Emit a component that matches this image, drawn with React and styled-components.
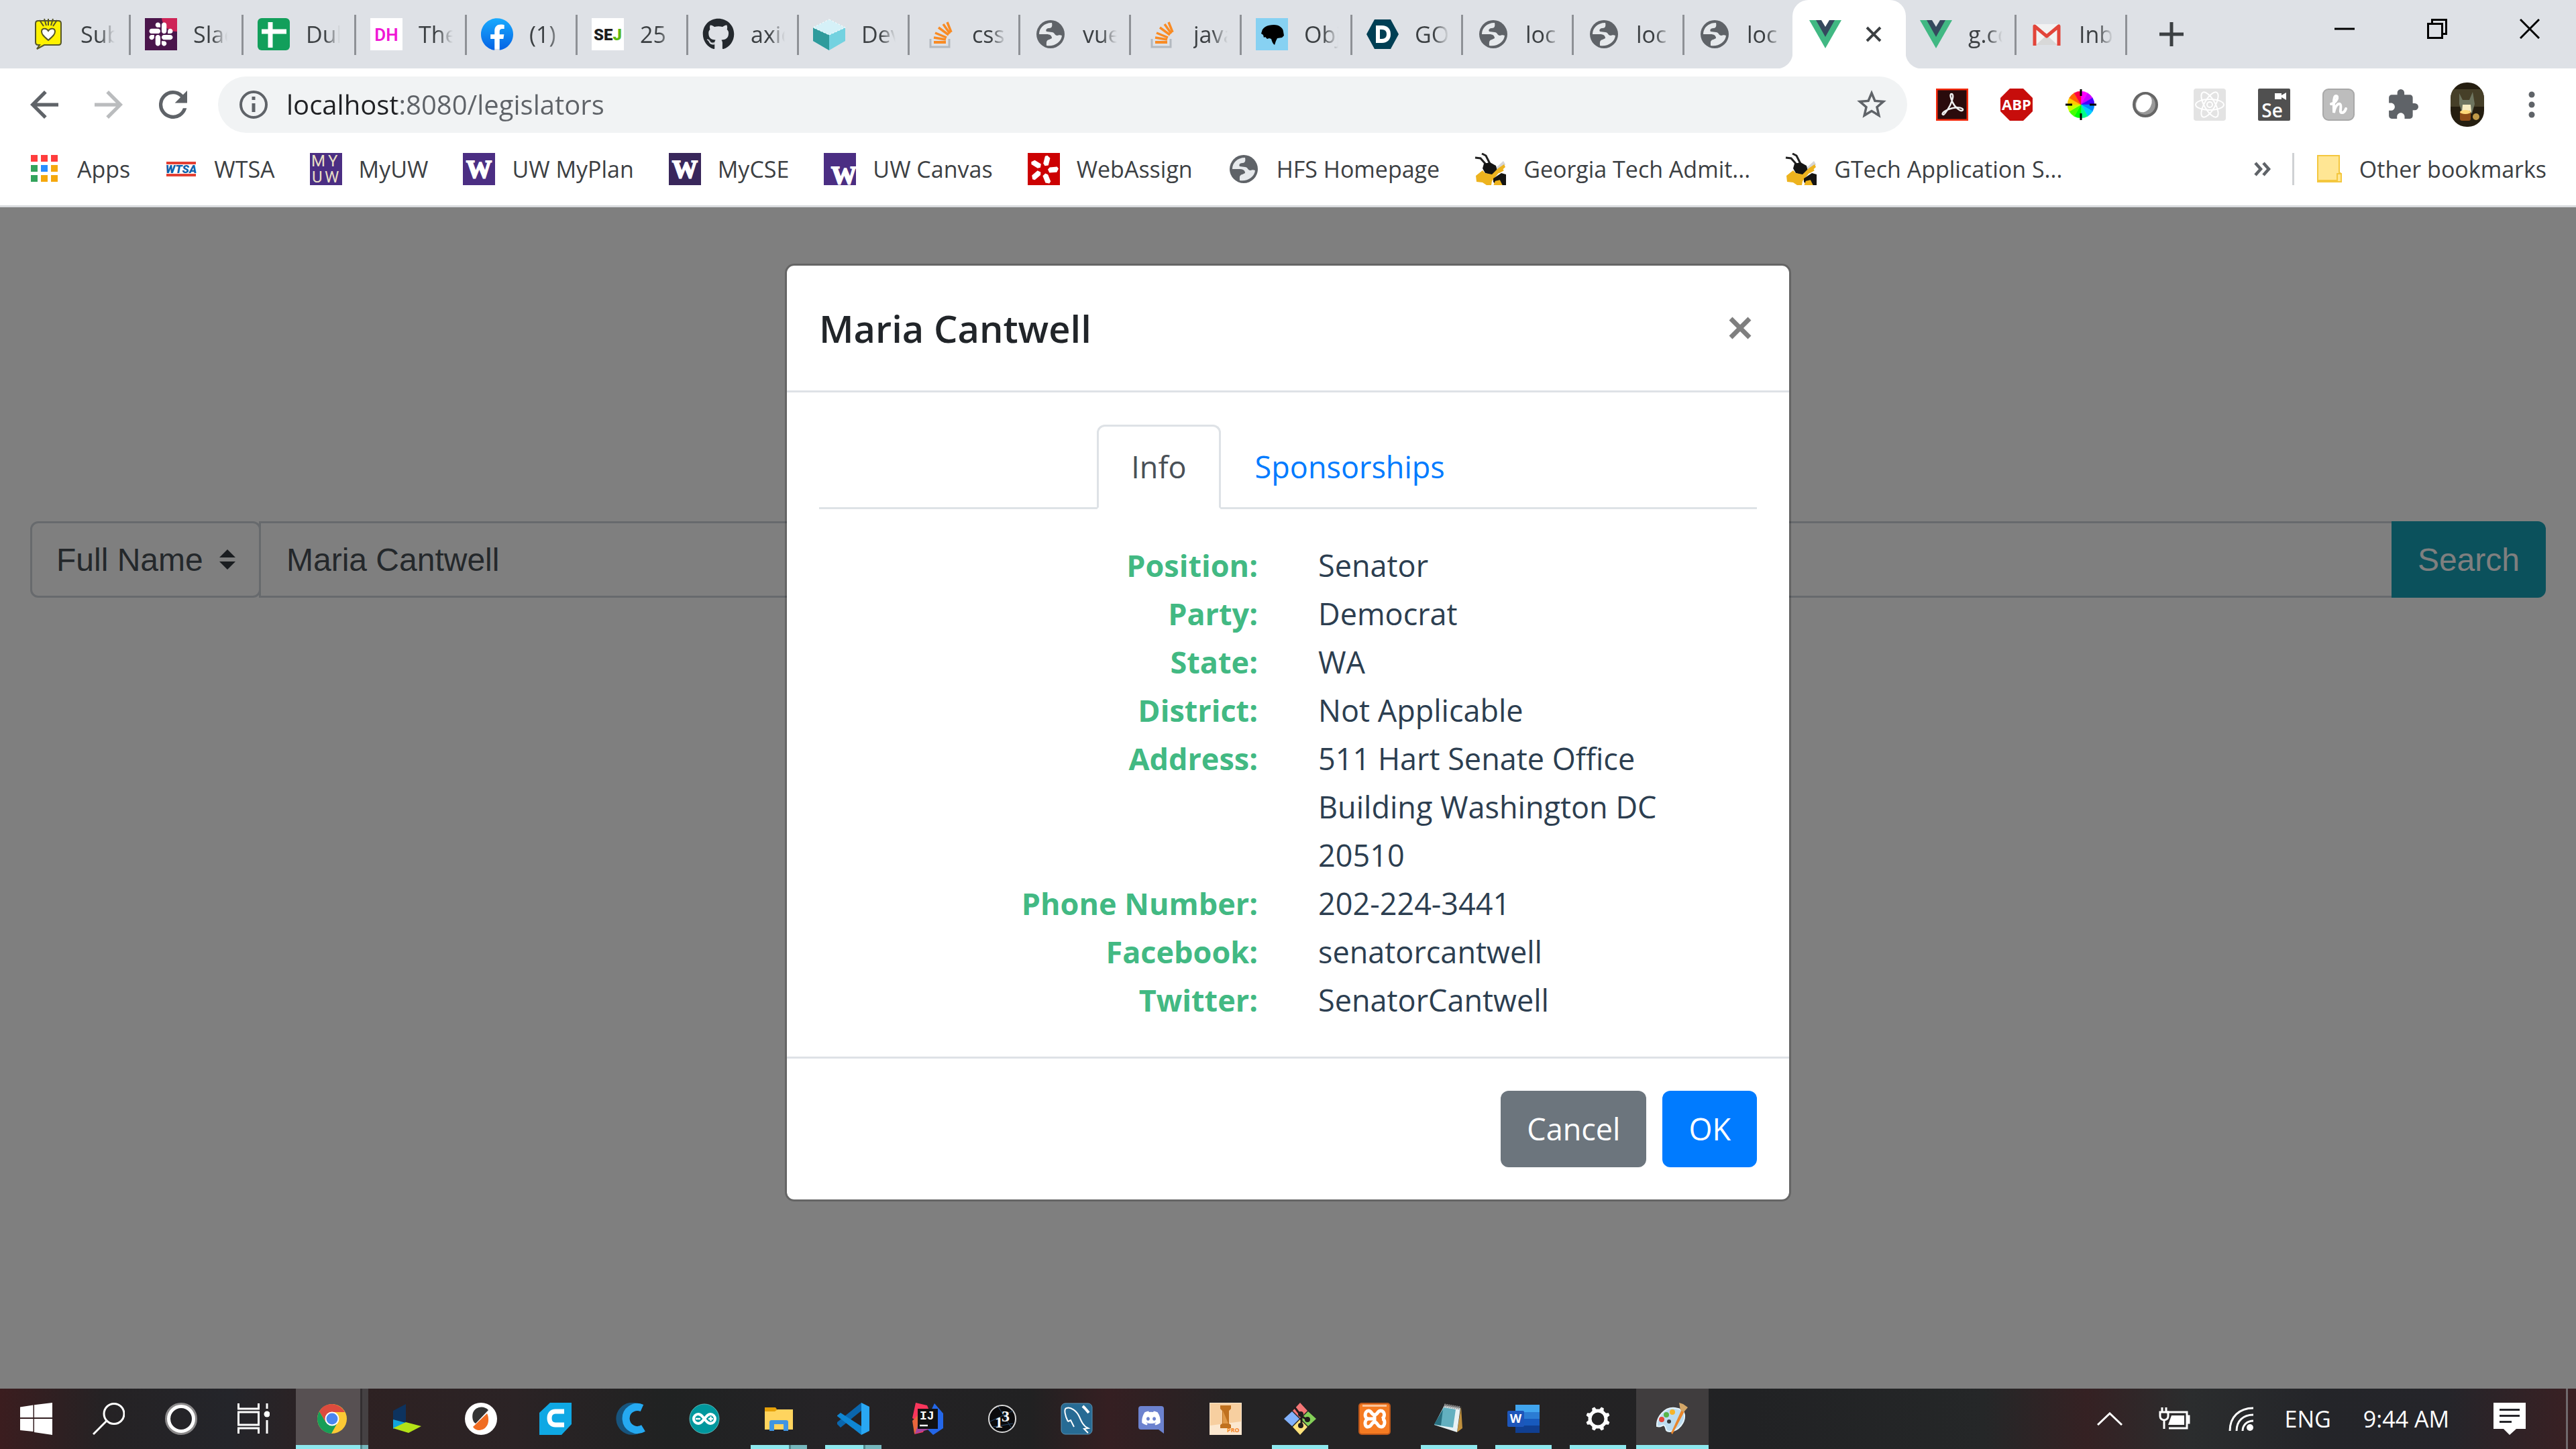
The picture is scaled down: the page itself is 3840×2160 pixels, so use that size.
import React, { useState } from "react";
import styled, { createGlobalStyle, css } from "styled-components";
import { FaGithub, FaSlack, FaDiscord } from "react-icons/fa";

const uiFont = `"Open Sans", "Noto Sans", sans-serif`;
const formFont = `"Liberation Sans", Arial, sans-serif`;

const GlobalStyle = createGlobalStyle`
  * { box-sizing: border-box; }
  body { margin: 0; font-family: ${uiFont}; }
  button, input, select { font-family: inherit; margin: 0; }
  button { border: 0; padding: 0; background: none; cursor: pointer; }
  a { text-decoration: none; }
  svg { display: block; flex: none; }
`;

/* ---------- layout ---------- */

const Screen = styled.div`
  display: flex;
  flex-direction: column;
  min-height: 100vh;
`;

const TabStrip = styled.div`
  display: flex;
  height: 102px;
  padding-left: 27px;
  background: #dee1e6;
`;

const Tab = styled.button`
  display: flex;
  align-items: center;
  flex: none;
  gap: 24px;
  width: ${(p) => (p.$wide ? 168 : 165)}px;
  padding-left: 21px;
  color: #3c4043;
  background: linear-gradient(#8e9196, #8e9196) right 22px / 3px 60px no-repeat;
  ${(p) => p.$last && css`background: none;`}
`;

const TabTitle = styled.span`
  width: 51px;
  overflow: hidden;
  white-space: nowrap;
  text-align: left;
  font-size: 34px;
  line-height: 48px;
  mask-image: linear-gradient(90deg, #000 55%, transparent);
`;

const ActiveTab = styled.div`
  position: relative;
  display: flex;
  align-items: center;
  flex: none;
  gap: 36px;
  width: 169px;
  margin-left: -4px;
  padding-left: 25px;
  background: #fff;
  border-radius: 24px 24px 0 0;

  &::before,
  &::after {
    content: "";
    position: absolute;
    bottom: 0;
    width: 24px;
    height: 24px;
  }
  &::before {
    right: 100%;
    background: radial-gradient(circle at 0 0, transparent 24px, #fff 25px);
  }
  &::after {
    left: 100%;
    background: radial-gradient(circle at 100% 0, transparent 24px, #fff 25px);
  }
`;

const NewTab = styled.button`
  display: grid;
  place-items: center;
  width: 84px;
  margin-left: 24px;
`;

const WindowControls = styled.div`
  display: flex;
  height: 86px;
  margin-left: auto;
`;

const WindowButton = styled.button`
  display: grid;
  place-items: center;
  width: 138px;
`;

const Toolbar = styled.div`
  display: flex;
  align-items: center;
  height: 108px;
  padding: 0 18px;
  background: #fff;
`;

const ToolButton = styled.button`
  display: grid;
  place-items: center;
  flex: none;
  width: 96px;
  height: 84px;
`;

const AddressBar = styled.div`
  display: flex;
  align-items: center;
  flex: 1;
  height: 84px;
  margin: 0 19px;
  padding: 0 29px 0 31px;
  gap: 27px;
  border-radius: 42px;
  background: #f1f3f4;
`;

const AddressInput = styled.input`
  flex: 1;
  border: 0;
  padding: 0;
  outline: none;
  font-size: 40px;
  line-height: 60px;
  color: transparent;
  background: linear-gradient(90deg, #202124 165px, #5f6368 165px);
  background-clip: text;
`;

const BookmarksBar = styled.nav`
  display: flex;
  align-items: center;
  height: 99px;
  padding: 0 44px 12px 42px;
  background: #fff;
  border-bottom: 3px solid #d9dbde;
`;

const Bookmark = styled.a`
  display: flex;
  align-items: center;
  flex: none;
  gap: 25px;
  margin-right: 52px;
  font-size: 34px;
  line-height: 48px;
  color: #3c4043;
  ${(p) => p.$end && css`margin-right: 0;`}
`;

const Overflow = styled.button`
  margin-left: auto;
`;

const Divider = styled.span`
  width: 3px;
  height: 48px;
  margin: 0 34px 0 30px;
  background: #cfd1d4;
`;

const Page = styled.main`
  position: relative;
  flex: 1;
  padding: 468px 45px 0;
  background: #fff;
`;

const SearchForm = styled.form`
  display: flex;
  height: 114px;
  font-family: ${formFont};
  font-size: 48px;
`;

const SelectWrap = styled.div`
  position: relative;
  width: 344px;

  svg {
    position: absolute;
    top: 42px;
    right: 38px;
    pointer-events: none;
  }
`;

const FieldSelect = styled.select`
  appearance: none;
  width: 100%;
  height: 100%;
  padding: 0 84px 0 36px;
  border: 3px solid #ced4da;
  border-radius: 12px;
  background: #fff;
  color: #495057;
  font-size: 48px;
`;

const SearchInput = styled.input`
  flex: 1;
  min-width: 0;
  margin-left: -3px;
  padding: 0 38px;
  border: 3px solid #ced4da;
  background: #fff;
  color: #495057;
  font-size: 48px;
`;

const SearchButton = styled.button`
  padding: 0 39px;
  margin-left: -3px;
  border-radius: 0 12px 12px 0;
  background: #17a2b8;
  color: #fff;
  font-size: 48px;
`;

const Backdrop = styled.div`
  position: absolute;
  inset: 0;
  display: flex;
  align-items: flex-start;
  justify-content: center;
  padding-top: 84px;
  background: rgba(0, 0, 0, 0.5);
`;

const Modal = styled.section`
  width: 1500px;
  max-width: 100%;
  border: 3px solid rgba(0, 0, 0, 0.2);
  border-radius: 14px;
  background: #fff;
  background-clip: padding-box;
  color: #2c3e50;
  font-size: 45px;
  line-height: 72px;
`;

const ModalHeader = styled.header`
  display: flex;
  justify-content: space-between;
  align-items: flex-start;
  padding: 48px;
  border-bottom: 3px solid #dee2e6;
`;

const ModalTitle = styled.h5`
  margin: 0;
  font-size: 56px;
  font-weight: 600;
  line-height: 90px;
  color: #212529;
`;

const CloseButton = styled.button`
  display: grid;
  place-items: center;
  width: 50px;
  height: 90px;
`;

const ModalBody = styled.div`
  padding: 48px;
`;

const NavTabs = styled.nav`
  display: flex;
  justify-content: center;
  margin-bottom: 48px;
  border-bottom: 3px solid #dee2e6;
`;

const NavLink = styled.a`
  margin-bottom: -3px;
  padding: 24px 48px;
  border: 3px solid transparent;
  border-radius: 12px 12px 0 0;
  color: #007bff;
  ${(p) =>
    p.$active &&
    css`
      color: #495057;
      background: #fff;
      border-color: #dee2e6 #dee2e6 #fff;
    `}
`;

const Details = styled.dl`
  display: grid;
  grid-template-columns: 1fr 1fr;
  column-gap: 90px;
  margin: 0;
`;

const Label = styled.dt`
  text-align: right;
  font-weight: 700;
  color: #42b983;
`;

const Value = styled.dd`
  margin: 0;
  padding-right: 36px;
`;

const ModalFooter = styled.footer`
  display: flex;
  justify-content: flex-end;
  gap: 24px;
  padding: 48px;
  border-top: 3px solid #dee2e6;
`;

const ModalButton = styled.button`
  height: 114px;
  padding: 0 39px;
  border-radius: 12px;
  background: ${(p) => (p.$primary ? "#007bff" : "#6c757d")};
  color: #fff;
  font-size: 45px;
  line-height: 72px;
`;

const Taskbar = styled.footer`
  display: flex;
  height: 90px;
  background: linear-gradient(
    90deg,
    #3b1d1f 0,
    #252224 4%,
    #24252a 9%,
    #2e2122 13%,
    #2b2325 20%,
    #202222 26%,
    #252326 32%,
    #212122 40%,
    #351f22 43%,
    #242324 48%,
    #252324 58%,
    #212224 68%,
    #252728 77%,
    #352123 81%,
    #2b2d2e 85%,
    #242529 90%,
    #25252a 95%,
    #3a2023 100%
  );
`;

const TaskGroup = styled.div`
  display: flex;
  gap: ${(p) => p.$gap || 0}px;
  margin-right: 9px;
`;

const bar = {
  none: "none",
  open: "linear-gradient(#8ee8ee, #8ee8ee) center bottom / 84px 6px no-repeat",
  stack:
    "linear-gradient(90deg, #8ee8ee 57px, #51888c 57px, #51888c 60px, #76b7bd 60px) center bottom / 84px 6px no-repeat",
  active: "linear-gradient(#8ee8ee, #8ee8ee) bottom / 100% 6px no-repeat, #403d3e",
  focus:
    "linear-gradient(90deg, #8ee8ee 96px, #51888c 96px, #51888c 99px, #76b7bd 99px) bottom / 100% 6px no-repeat, linear-gradient(90deg, #575052 96px, #332f31 96px, #332f31 99px, #454143 99px)",
};

const TaskButton = styled.button`
  display: grid;
  place-items: center;
  width: 108px;
  height: 90px;
  background: ${(p) => bar[p.$state || "none"]};
`;

const Tray = styled.div`
  display: flex;
  align-items: center;
  margin-left: auto;
  color: #fff;
  font-size: 34px;
  line-height: 48px;
`;

const TrayItem = styled.button`
  display: grid;
  place-items: center;
  height: 90px;
  margin-right: ${(p) => p.$space}px;
  color: #fff;
  font-size: 34px;
`;

const ShowDesktop = styled.button`
  width: 15px;
  height: 90px;
  border-left: 3px solid #706a6d;
`;

/* ---------- icons ---------- */

const Svg = ({ w = 48, h = w, box, children, ...rest }) => (
  <svg width={w} height={h} viewBox={box || `0 0 ${w} ${h}`} fill="none" aria-hidden="true" {...rest}>
    {children}
  </svg>
);

const Substack = () => (
  <Svg>
    <path d="M9 4h30q4 0 4 4v28q0 4-4 4H18L7 46l4-6H9q-4 0-4-4V8q0-4 4-4z" fill="#fff200" stroke="#55562a" strokeWidth="2" />
    <path d="M11 3l6 9M18 1l3 10M24 1v10M31 1l-3 10M37 3l-6 9" stroke="#55562a" strokeWidth="2" />
    <path d="M24 33C17 27 14 24 14 20c0-5 7-6 10-1 3-5 10-4 10 1 0 4-3 7-10 13z" fill="#fff" stroke="#55562a" strokeWidth="2" />
  </Svg>
);

const Slack = () => (
  <Svg>
    <path d="M0 0h48v48H0z" fill="#4a154b" />
    <path d="M25 0h23v20A22 22 0 0 1 25 0z" fill="#ce2457" />
    <FaSlack x="4" y="4" size={40} color="#fff" />
  </Svg>
);

const Cross = () => (
  <Svg>
    <rect width="48" height="48" rx="6" fill="#129f5b" />
    <path d="M19 6v38M6 20h37" stroke="#fff" strokeWidth="7" />
  </Svg>
);

const Dh = () => (
  <Svg>
    <path d="M0 0h48v48H0z" fill="#fff" />
    <text x="24" y="34" textAnchor="middle" fontSize="26" fontWeight="600" fontFamily="Roboto, sans-serif" fill="#f017d5">DH</text>
  </Svg>
);

const Facebook = () => (
  <Svg box="0 0 24 24">
    <defs>
      <linearGradient id="fb" x1="0" y1="0" x2="0" y2="1">
        <stop stopColor="#19abfe" />
        <stop offset="1" stopColor="#0562e4" />
      </linearGradient>
    </defs>
    <circle cx="12" cy="12" r="11" fill="#fff" />
    <path fill="url(#fb)" d="M24 12.07c0-6.63-5.37-12-12-12s-12 5.37-12 12c0 5.99 4.39 10.95 10.12 11.85v-8.38H7.08v-3.47h3.05V9.43c0-3.01 1.79-4.67 4.53-4.67 1.31 0 2.69.24 2.69.24v2.95h-1.52c-1.49 0-1.96.93-1.96 1.87v2.25h3.33l-.53 3.47h-2.8v8.38C19.61 23.03 24 18.06 24 12.07z" />
  </Svg>
);

const Sej = () => (
  <Svg>
    <path d="M0 0h48v48H0z" fill="#fff" />
    <text x="24" y="33" textAnchor="middle" fontSize="24" fontWeight="900" fontFamily="Roboto, sans-serif" fill="#1d1d1d">
      SE<tspan fill="#5cb811">J</tspan>
    </text>
  </Svg>
);

const Cube = () => (
  <Svg>
    <path d="M24 2l24 12v20L24 48 0 34V14z" fill="#73d2e0" />
    <path d="M0 14l24 11v23L0 34z" fill="#2f9b9c" />
    <path d="M24 2l24 12-24 11L0 14z" fill="#d5f1f8" stroke="#fff" strokeWidth="1" strokeDasharray="3 2" />
  </Svg>
);

const StackOverflow = () => (
  <Svg>
    <path d="M10 31v12h28V31" stroke="#b3b9c0" strokeWidth="3" />
    <path d="M15 36h18" stroke="#f98b24" strokeWidth="4" />
    <path d="M15 29l18 3M17 22l17 7M22 14l15 11M29 9l10 14M35 6l6 15" stroke="#f98b24" strokeWidth="3.5" />
  </Svg>
);

const Globe = () => (
  <Svg>
    <circle cx="24" cy="24" r="21" fill="#5f6368" />
    <path d="M26 7C14 7 7 15 7 24h11c5 0 8 2 8 6l-4 2c-5 1-4 5-4 9 11 2 22-5 23-15-3-1-4-1-7 0-4 0-4-5-8-5l-8-1c-2-3 1-5 4-5 4 0 5-3 4-8z" fill="#e6e9ec" />
  </Svg>
);

const Head = () => (
  <Svg>
    <path d="M0 0h48v48H0z" fill="#87d1f2" />
    <path d="M27 10c8 0 14 5 14 10l1 6-3 3-7 1-2 4-2 6c-3-2-4-6-5-9l-3-1-3 1-3-3-2 1-1-4-3-2 1-3c1-6 8-10 18-10z" fill="#000" />
  </Svg>
);

const HexD = () => (
  <Svg>
    <path d="M12 2h24l12 22-12 22H12L0 24z" fill="#003f54" />
    <path d="M17 14h6c7 0 10 4 10 10s-3 10-10 10h-6z" stroke="#fff" strokeWidth="6" />
  </Svg>
);

const Vue = ({ gap = "#dee1e6" }) => (
  <Svg>
    <path d="M0 3h48L24 45z" fill="#41b883" />
    <path d="M10 3h28L24 28z" fill="#35495e" />
    <path d="M18 3h12l-6 10z" fill={gap} />
  </Svg>
);

const Gmail = () => (
  <Svg>
    <path d="M5 9h38v31H5z" fill="#f2f2f2" />
    <path d="M8 40l16-15 16 15z" fill="#d8d8d8" />
    <path d="M6 41V12l18 15 18-15v29" stroke="#e2453a" strokeWidth="5" strokeLinejoin="round" />
  </Svg>
);

const Apps = () => (
  <Svg>
    {["#ff3d3d", "#ff3d3d", "#ff3d3d", "#33a35c", "#2a8cff", "#f5a80e", "#33a35c", "#f5a80e", "#f5a80e"].map((c, i) => (
      <rect key={i} x={4 + (i % 3) * 15} y={3 + Math.floor(i / 3) * 15} width="10" height="10" fill={c} />
    ))}
  </Svg>
);

const Wtsa = () => (
  <Svg>
    <path d="M2 13h44v4H2zM2 31h44v4H2z" fill="#e33f32" />
    <text x="24" y="30" textAnchor="middle" fontSize="17" fontWeight="900" fontStyle="italic" fontFamily="Roboto, sans-serif" fill="#0d61aa">WTSA</text>
  </Svg>
);

const MyUw = () => (
  <Svg>
    <path d="M0 0h48v48H0z" fill="#4b2e83" />
    <g fontSize="24" fontFamily="Roboto, sans-serif" fill="#e8dfc5">
      <text x="2" y="20">M</text>
      <text x="27" y="20">Y</text>
      <text x="3" y="44">U</text>
      <text x="22" y="44">W</text>
    </g>
  </Svg>
);

const BlockW = ({ bg = "#4b2e83", x = 24, y = 37 }) => (
  <Svg>
    <path d="M0 0h48v48H0z" fill={bg} />
    <text x={x} y={y} textAnchor="middle" fontSize="38" fontWeight="700" fontFamily="Liberation Serif, serif" fill="#fff" stroke="#fff" strokeWidth="2">W</text>
  </Svg>
);

const WebAssign = () => (
  <Svg>
    <path d="M0 0h48v48H0z" fill="#cc0102" />
    {[0, 72, 144, 216, 288].map((a) => (
      <path key={a} d="M24 3l5 3v11l-5 2-3-3V5z" fill="#fff" transform={`rotate(${a + 14} 24 25)`} />
    ))}
  </Svg>
);

const Buzz = () => (
  <Svg>
    <path d="M1 7l8 1 8 9M11 1l6 3 6 12" stroke="#222" strokeWidth="3" />
    <path d="M30 24l13-12 3 5-10 14z" fill="#d5d5d5" />
    <path d="M14 16l9-2 9 5 2 8-8 6-10-3-4-7z" fill="#141414" />
    <path d="M12 26L2 34l1 9 9 1 6 4h7l1-6 10-12 10-9-2-4-9 6-9 9-10-2z" fill="#edb31e" />
    <path d="M28 38l12-8 7 2v16h-6l-3-3-6 3-4-5z" fill="#151411" />
    <path d="M30 48l2-5 5-1 3 6zM36 29l7-4" fill="#edb31e" stroke="#edb31e" strokeWidth="3" />
  </Svg>
);

const Folder = () => (
  <Svg w={38} h={48}>
    <path d="M1 4h32v25l3 2v12H1z" fill="#ffe694" stroke="#f4c73e" strokeWidth="2" />
    <path d="M30 31h6v12h-6zM1 41h29" stroke="#f4c73e" strokeWidth="2" />
  </Svg>
);

const Back = ({ color = "#5f6368", flip }) => (
  <Svg w={42} box="4 4 16 16">
    <path
      fill={color}
      transform={flip ? "rotate(180 12 12)" : undefined}
      d="M20 11H7.83l5.59-5.59L12 4l-8 8 8 8 1.41-1.41L7.83 13H20v-2z"
    />
  </Svg>
);

const Reload = () => (
  <Svg w={42} box="4 4 16 16">
    <path fill="#5f6368" d="M17.65 6.35A7.96 7.96 0 0 0 12 4a8 8 0 1 0 7.73 10h-2.08A6 6 0 1 1 12 6c1.66 0 3.14.69 4.22 1.78L13 11h7V4l-2.35 2.35z" />
  </Svg>
);

const Info = () => (
  <Svg w={44}>
    <circle cx="22" cy="22" r="19" stroke="#5f6368" strokeWidth="4" />
    <path d="M22 20v13M22 10v5" stroke="#5f6368" strokeWidth="5" />
  </Svg>
);

const Star = () => (
  <Svg w={48} box="1 1 22 22">
    <path fill="#5f6368" d="M22 9.24l-7.19-.62L12 2 9.19 8.63 2 9.24l5.46 4.73L5.82 21 12 17.27 18.18 21l-1.63-7.03L22 9.24zM12 15.4l-3.76 2.27 1-4.28-3.32-2.88 4.38-.38L12 6.1l1.71 4.04 4.38.38-3.32 2.88 1 4.28L12 15.4z" />
  </Svg>
);

const Acrobat = () => (
  <Svg>
    <path d="M1 1h46v46H1z" fill="#2a0b0c" stroke="#f3280b" strokeWidth="3" />
    <path d="M11 39c-5-1 4-8 14-10 8-2 16 0 15 3-2 4-12-4-15-11-3-6-5-13-2-13 4 0 2 9-2 17-4 7-8 14-10 14z" stroke="#eee" strokeWidth="2.5" />
  </Svg>
);

const Abp = () => (
  <Svg>
    <path d="M14 0h20l14 14v20L34 48H14L0 34V14z" fill="#c70d0b" />
    <text x="24" y="32" textAnchor="middle" fontSize="22" fontWeight="700" fontFamily="Open Sans, sans-serif" fill="#fff">ABP</text>
  </Svg>
);

const wheel = ["#f0f", "#c0f", "#40f", "#08f", "#0cf", "#0f8", "#0f0", "#4f0", "#cf0", "#fc0", "#f60", "#f04"];
const ColorWheel = () => (
  <Svg>
    {wheel.map((c, i) => (
      <path key={c} d="M24 24V4a20 20 0 0 1 10 2.7z" fill={c} stroke={c} strokeWidth=".5" transform={`rotate(${i * 30} 24 24)`} />
    ))}
    <path d="M24 1v10M24 37v10M1 24h10M37 24h10" stroke="#000" strokeWidth="3" />
  </Svg>
);

const Orb = () => (
  <Svg>
    <circle cx="24" cy="24" r="17" fill="#999" stroke="#666" strokeWidth="4" />
    <ellipse cx="22" cy="22" rx="11" ry="14" fill="#fff" transform="rotate(30 22 22)" />
  </Svg>
);

const ReactTools = () => (
  <Svg>
    <rect width="48" height="48" rx="4" fill="#e3e3e3" />
    <g stroke="#fff" strokeWidth="2">
      {[0, 60, 120].map((a) => (
        <ellipse key={a} cx="24" cy="24" rx="21" ry="8" transform={`rotate(${a} 24 24)`} />
      ))}
      <circle cx="24" cy="24" r="4" />
    </g>
  </Svg>
);

const Selenium = () => (
  <Svg>
    <rect width="48" height="48" rx="2" fill="#505050" />
    <path d="M25 7h10v3l7-4v11l-7-4v3H25z" fill="#fff" />
    <text x="21" y="43" textAnchor="middle" fontSize="28" fontWeight="600" fontFamily="Open Sans, sans-serif" fill="#fff">Se</text>
  </Svg>
);

const Honey = () => (
  <Svg>
    <rect x="1" y="1" width="46" height="46" rx="8" fill="#bdbdbd" stroke="#a8a8a8" strokeWidth="2" />
    <path d="M13 23c8-2 12-12 7-12-4 0-3 14-3 25 2-10 6-14 9-13 4 2-2 13 3 13 3 0 5-3 6-6" stroke="#fff" strokeWidth="4" strokeLinecap="round" />
  </Svg>
);

const Puzzle = () => (
  <Svg w={46} box="1 1 22 22">
    <path fill="#5f6368" d="M20.5 11H19V7c0-1.1-.9-2-2-2h-4V3.500a2.500 2.500 0 0 0-5 0V5H4c-1.100 0-1.990.9-1.990 2v3.800H3.500c1.490 0 2.700 1.210 2.700 2.700s-1.210 2.700-2.700 2.700H2V20c0 1.100.9 2 2 2h3.800v-1.500c0-1.490 1.210-2.700 2.700-2.700s2.700 1.210 2.700 2.700V22H17c1.100 0 2-.9 2-2v-4h1.500a2.500 2.500 0 0 0 0-5z" />
  </Svg>
);

const Avatar = () => (
  <Svg w={50} h={66}>
    <clipPath id="avatar"><rect width="50" height="66" rx="24" /></clipPath>
    <g clipPath="url(#avatar)">
      <path d="M0 0h50v66H0z" fill="#251e10" />
      <path d="M0 10h50v26H0z" fill="#463f28" />
      <path d="M13 16l5 10h10l5-12 3 18-4 14H17l-4-14z" fill="#6e7560" />
      <path d="M18 33h12l1 11H17z" fill="#f7ecc1" />
      <rect x="14" y="42" width="16" height="15" rx="3" fill="#8f4e17" />
      <ellipse cx="22" cy="44" rx="8" ry="3" fill="#ffd978" />
      <circle cx="38" cy="51" r="5" fill="#c09a49" />
    </g>
  </Svg>
);

const Dots = () => (
  <Svg w={10} h={42}>
    {[6, 21, 36].map((y) => <circle key={y} cx="5" cy={y} r="4.500" fill="#5f6368" />)}
  </Svg>
);

/* taskbar */

const Windows = () => (
  <Svg>
    <path fill="#fff" d="M0 6.500l19.500-3V22H0zM21 3.200L48 0v22H21zM0 24h19.500v19L0 41zM21 24h27v24l-27-4z" />
  </Svg>
);

const Search = () => (
  <Svg>
    <circle cx="32" cy="16.500" r="15" stroke="#fff" strokeWidth="3" />
    <path d="M21 27L1 47" stroke="#fff" strokeWidth="3" />
  </Svg>
);

const Cortana = () => (
  <Svg>
    <circle cx="24" cy="24" r="22" stroke="#8b898a" strokeWidth="4" />
    <circle cx="24" cy="24" r="18.500" stroke="#fff" strokeWidth="5" />
  </Svg>
);

const TaskView = () => (
  <Svg>
    <path d="M1.500 1v8h30V1M1.500 46v-8h30v8M1.500 14h30v19h-30zM44 1v8M44 26v20" stroke="#fff" strokeWidth="3" />
    <circle cx="44" cy="17" r="4.500" fill="#fff" />
  </Svg>
);

const Chrome = () => (
  <Svg>
    <circle cx="24" cy="24" r="22" fill="#fcc934" />
    <path d="M24 2a22 22 0 0 1 19 12H24L14.500 29 5 13A22 22 0 0 1 24 2z" fill="#dc4b3e" />
    <path d="M5 13a22 22 0 0 0 18 33l9.500-17-8.500 5-9.500-5z" fill="#179e58" />
    <circle cx="24" cy="24" r="10.500" fill="#fff" />
    <circle cx="24" cy="24" r="8.500" fill="#4a86f0" />
  </Svg>
);

const Blocks = () => (
  <Svg>
    <path d="M4 12L23 2v28L4 26z" fill="#0d335f" />
    <path d="M4 25l19 5L4 39z" fill="#11a4dc" />
    <path d="M4 38l19-9 23 6-19 10z" fill="#b4e317" />
  </Svg>
);

const Pill = () => (
  <Svg>
    <circle cx="24" cy="24" r="24" fill="#fff" />
    <path d="M35 11C29 4 16 5 12 15c-2 7 0 14 4 16z" fill="#333" />
    <path d="M33 16L12 36c5 8 18 6 22-4 2-6 1-12-1-16z" fill="#f06c22" />
  </Svg>
);

const Cura = () => (
  <Svg>
    <path d="M16 0h32v32L33 48H0V15z" fill="#0fa8e4" />
    <path d="M37 13H24c-6 0-9 4-9 10s3 10 9 10h13" stroke="#fff" strokeWidth="7" />
  </Svg>
);

const CubeC = () => (
  <Svg>
    <path d="M38 8A19 19 0 1 0 40 38" stroke="#17547d" strokeWidth="10" />
    <path d="M42 8A17 17 0 1 0 44 38" stroke="#25a9f1" strokeWidth="11" />
  </Svg>
);

const Arduino = () => (
  <Svg>
    <circle cx="24" cy="24" r="22" fill="#00979d" stroke="#5db9bb" strokeWidth="1" />
    <path d="M24 24c-4-5-6-7-9-7a7 7 0 0 0 0 14c3 0 5-2 9-7s6-7 9-7a7 7 0 0 1 0 14c-3 0-5-2-9-7z" stroke="#fff" strokeWidth="4" />
    <path d="M11 24h7M30 24h7M33.500 20.500v7" stroke="#fff" strokeWidth="2.500" />
  </Svg>
);

const Explorer = () => (
  <Svg>
    <path d="M3 7h16l3 4v7H3z" fill="#e6a109" />
    <path d="M3 13h15l4-3h23v30H3z" fill="#ffd45e" />
    <path d="M10 42V29q0-3 3-3h22q3 0 3 3v13h-7V32H17v10z" fill="#3f95e2" />
  </Svg>
);

const VsCode = () => (
  <Svg>
    <path d="M36 0v12L5 37l-5-5v-3z" fill="#0a66ad" />
    <path d="M0 19l5-4 31 20v13L0 20z" fill="#0f86d2" />
    <path d="M36 0l12 6v36l-12 6z" fill="#29a7f3" />
  </Svg>
);

const Idea = () => (
  <Svg>
    <path d="M34 1l13 15v22L32 48 18 34z" fill="#2467e8" />
    <path d="M6 0l17 4 6 14-12 26-13 3 6-19-9-5z" fill="#f9365c" />
    <path d="M1 27l8-8 8 10-6 14-7 3z" fill="#e9663c" />
    <path d="M5 46l5-14 18 7z" fill="#a445a0" />
    <path d="M9 9h30v30H9z" fill="#111" />
    <text x="12" y="25" fontSize="18" fontWeight="700" fontFamily="Liberation Mono, monospace" fill="#fff">IJ</text>
    <path d="M12 34h12" stroke="#fff" strokeWidth="2.500" />
  </Svg>
);

const Beta = () => (
  <Svg>
    <circle cx="24" cy="24" r="20" fill="#0a0a0c" stroke="#d8d8d8" strokeWidth="2" />
    <path d="M6 28l34-16M10 36l30-5M18 6l20 32" stroke="#27476a" />
    <text x="13" y="37" fontSize="24" fontWeight="700" fontFamily="Liberation Serif, serif" fill="#fff">1</text>
    <text x="23" y="28" fontSize="24" fontWeight="700" fontFamily="Liberation Serif, serif" fill="#fff">3</text>
  </Svg>
);

const MySql = () => (
  <Svg>
    <rect x="1" y="1" width="46" height="46" rx="6" fill="#276b94" stroke="#5d93b4" strokeWidth="1" />
    <path d="M11 28C7 20 4 9 9 8c6-2 15 4 19 13 3 7 6 14 13 17l-6 1 6 6M11 28l4-2 5 10" stroke="#fff" strokeWidth="2" />
    <path d="M33 5l4 4M37 9l5 6" stroke="#fff" strokeWidth="4" />
  </Svg>
);

const Discord = () => (
  <Svg>
    <path d="M9 5h30q4 0 4 4v37l-8-6H9q-4 0-4-4V9q0-4 4-4z" fill="#6c82cf" />
    <FaDiscord x="9" y="8" size={30} color="#fff" />
  </Svg>
);

const Inventor = () => (
  <Svg>
    <path d="M0 0h48v48H0z" fill="#fbe7cf" />
    <path d="M1 1h46v27L1 34z" fill="#f7cfa0" />
    <path d="M16 4h16v5l-3 3v19l3 2v5H16v-5l3-2V12l-3-3z" fill="#c0711f" />
    <path d="M20 12l8 19h-8z" fill="#e09a4a" />
    <text x="26" y="44" fontSize="9" fontWeight="700" fontFamily="Open Sans, sans-serif" fill="#f4841f">PRO</text>
  </Svg>
);

const GitBash = () => (
  <Svg>
    <path d="M24 0l11 12-11 11-11-11z" fill="#f47676" />
    <path d="M12 13l11 11-11 11L0 24z" fill="#82b1fb" />
    <path d="M36 13l12 11-12 11-11-11z" fill="#84cf58" />
    <path d="M24 25l11 11-11 12-11-12z" fill="#fee27b" />
    <path d="M16 7l10 13v16M26 20l8 5" stroke="#201b1d" strokeWidth="3" />
    <circle cx="25" cy="17" r="4" fill="#201b1d" />
    <circle cx="25" cy="34" r="4" fill="#201b1d" />
    <circle cx="35" cy="25" r="4" fill="#201b1d" />
  </Svg>
);

const Xampp = () => (
  <Svg>
    <rect x="1" y="1" width="46" height="46" rx="4" fill="#f57b22" stroke="#bd571a" strokeWidth="2" />
    <path d="M6 3h36v3H6z" fill="#fac39a" />
    <g stroke="#fff" strokeWidth="5">
      <path d="M24 24h-9c-7 0-6-12 0-12 5 0 4 6 9 6s4-6 9-6c7 0 7 10 2 12" />
      <path d="M15 24c-6 0-7 12-1 12s5-7 10-7 4 7 10 7 7-12 1-12" />
      <path d="M24 18v11" />
    </g>
  </Svg>
);

const Notepad = () => (
  <Svg>
    <path d="M42 6l2 32-8 6z" fill="#c0903d" />
    <path d="M17 4l24 4-5 36L2 33z" fill="#e8f1f3" />
    <path d="M16 7l18 3-4 27L2 33z" fill="#63b0c0" />
    <path d="M15 10l-3 24-10-2z" fill="#286f80" />
    <path d="M17 4l24 4" stroke="#999" strokeWidth="5" strokeDasharray="2 1" />
  </Svg>
);

const Word = () => (
  <Svg>
    <path d="M12 3h36v11H12z" fill="#41a5ee" />
    <path d="M12 14h36v10H12z" fill="#2b7cd3" />
    <path d="M12 24h36v10H12z" fill="#185abd" />
    <path d="M12 34h36v11H12z" fill="#103f91" />
    <rect y="12" width="25" height="24" rx="2" fill="#1d56ba" />
    <text x="12.500" y="30" textAnchor="middle" fontSize="18" fontWeight="700" fontFamily="Open Sans, sans-serif" fill="#fff">W</text>
  </Svg>
);

const Gear = () => (
  <Svg>
    <circle cx="24" cy="24" r="12" stroke="#fff" strokeWidth="5" />
    {[22.5, 67.5, 112.5, 157.5, 202.5, 247.5, 292.5, 337.5].map((a) => (
      <path key={a} d="M20 12l2-6h4l2 6z" fill="#fff" transform={`rotate(${a} 24 24)`} />
    ))}
  </Svg>
);

const Paint = () => (
  <Svg>
    <path d="M28 8C12 6 0 22 1 35c7 2 8-3 11-1 4 3 0 9 8 9 14-1 23-14 22-25-1-6-6-9-14-10z" fill="#bcdcf0" stroke="#e6f4fb" strokeWidth="2" />
    <circle cx="19" cy="28" r="3" fill="#33383c" />
    <circle cx="8" cy="25" r="4" fill="#e5483b" />
    <circle cx="15" cy="18" r="4" fill="#57b54a" />
    <circle cx="24" cy="14" r="4" fill="#f6b429" />
    <path d="M38 10l4 3-18 34-2-2z" fill="#e8862c" />
    <path d="M34 0l6 2 7 5-6 7-5-3z" fill="#d4a768" />
  </Svg>
);

const Battery = () => (
  <Svg w={50} h={36}>
    <path d="M12 8h31v24H16M43 14h3v10h-3" stroke="#fff" strokeWidth="3" />
    <path d="M20 13h19v14H15z" fill="#fff" />
    <path d="M6 1v6M12 1v6M3 8h12v6q0 5-6 6-6-1-6-6zM9 20v13" stroke="#fff" strokeWidth="3" />
  </Svg>
);

const Wifi = () => (
  <Svg w={38} h={38}>
    <path d="M2 37C2 16 16 3 37 3M12 37c0-15 10-24 25-24M21 37c0-9 7-15 16-15" stroke="#fff" strokeWidth="3" />
    <circle cx="32" cy="32" r="5" fill="#fff" />
  </Svg>
);

const Note = () => (
  <Svg>
    <path d="M0 0h48v39H34l-10 9-9-9H0z" fill="#fff" />
    <path d="M9 10.500h30M9 19.500h30M9 28.500h18" stroke="#25252a" strokeWidth="3" />
  </Svg>
);

/* ---------- data ---------- */

const tabs = [
  { title: "Sub", icon: <Substack />, wide: true },
  { title: "Slac", icon: <Slack />, wide: true },
  { title: "Dul", icon: <Cross />, wide: true },
  { title: "The", icon: <Dh /> },
  { title: "(1)", icon: <Facebook /> },
  { title: "25", icon: <Sej /> },
  { title: "axio", icon: <FaGithub size={48} color="#24292e" /> },
  { title: "Dev", icon: <Cube /> },
  { title: "css", icon: <StackOverflow /> },
  { title: "vue", icon: <Globe /> },
  { title: "java", icon: <StackOverflow /> },
  { title: "Obj", icon: <Head /> },
  { title: "GO", icon: <HexD /> },
  { title: "loc", icon: <Globe /> },
  { title: "loc", icon: <Globe /> },
  { title: "loc", icon: <Globe />, last: true },
];

const bookmarks = [
  ["Apps", <Apps />],
  ["WTSA", <Wtsa />],
  ["MyUW", <MyUw />],
  ["UW MyPlan", <BlockW />],
  ["MyCSE", <BlockW bg="#39275b" />],
  ["UW Canvas", <BlockW x={30} y={46} />],
  ["WebAssign", <WebAssign />],
  ["HFS Homepage", <Globe />],
  ["Georgia Tech Admit...", <Buzz />],
  ["GTech Application S...", <Buzz />],
];

const extensions = [
  ["Acrobat", <Acrobat />],
  ["Adblock Plus", <Abp />],
  ["Color picker", <ColorWheel />],
  ["Reader", <Orb />],
  ["React tools", <ReactTools />],
  ["Selenium", <Selenium />],
  ["Honey", <Honey />],
  ["Extensions", <Puzzle />],
  ["Profile", <Avatar />],
  ["Menu", <Dots />],
];

const legislator = {
  name: "Maria Cantwell",
  info: [
    ["Position", "Senator"],
    ["Party", "Democrat"],
    ["State", "WA"],
    ["District", "Not Applicable"],
    ["Address", "511 Hart Senate Office Building Washington DC 20510"],
    ["Phone Number", "202-224-3441"],
    ["Facebook", "senatorcantwell"],
    ["Twitter", "SenatorCantwell"],
  ],
};

const pinned = [
  ["Start", <Windows />],
  ["Search", <Search />],
  ["Cortana", <Cortana />],
  ["Task View", <TaskView />],
];

const apps = [
  ["Chrome", <Chrome />, "focus"],
  ["Blocks", <Blocks />],
  ["Slicer", <Pill />],
  ["Cura", <Cura />],
  ["Cube", <CubeC />],
  ["Arduino", <Arduino />],
  ["File Explorer", <Explorer />, "stack"],
  ["VS Code", <VsCode />, "stack"],
  ["IntelliJ", <Idea />],
  ["Processing", <Beta />],
  ["MySQL", <MySql />],
  ["Discord", <Discord />],
  ["Inventor", <Inventor />],
  ["Git Bash", <GitBash />, "open"],
  ["XAMPP", <Xampp />],
  ["Notepad", <Notepad />, "open"],
  ["Word", <Word />, "open"],
  ["Settings", <Gear />, "open"],
  ["Paint", <Paint />, "active"],
];

/* ---------- components ---------- */

const BrowserTab = ({ title, icon, wide, last }) => (
  <Tab $wide={wide} $last={last}>
    {icon}
    <TabTitle>{title}</TabTitle>
  </Tab>
);

const Browser = () => (
  <header>
    <TabStrip>
      {tabs.map((t, i) => <BrowserTab key={i} {...t} />)}
      <ActiveTab>
        <Vue gap="#fff" />
        <button aria-label="Close tab">
          <Svg w={24}><path d="M2 2l20 20M22 2L2 22" stroke="#3c4043" strokeWidth="4" /></Svg>
        </button>
      </ActiveTab>
      <BrowserTab title="g.co" icon={<Vue />} />
      <BrowserTab title="Inb" icon={<Gmail />} />
      <NewTab aria-label="New tab">
        <Svg w={36}><path d="M18 0v36M0 18h36" stroke="#3c4043" strokeWidth="5" /></Svg>
      </NewTab>
      <WindowControls>
        <WindowButton aria-label="Minimize">
          <Svg w={30}><path d="M0 15h30" stroke="#000" strokeWidth="3" /></Svg>
        </WindowButton>
        <WindowButton aria-label="Restore">
          <Svg w={30}><path d="M1.500 7.500h21v21h-21zM7.500 7V1.500h21v21H23" stroke="#000" strokeWidth="3" /></Svg>
        </WindowButton>
        <WindowButton aria-label="Close">
          <Svg w={30}><path d="M1 1l28 28M29 1L1 29" stroke="#000" strokeWidth="3" /></Svg>
        </WindowButton>
      </WindowControls>
    </TabStrip>
    <Toolbar>
      <ToolButton aria-label="Back"><Back /></ToolButton>
      <ToolButton aria-label="Forward"><Back flip color="#babcbe" /></ToolButton>
      <ToolButton aria-label="Reload"><Reload /></ToolButton>
      <AddressBar>
        <Info />
        <AddressInput aria-label="Address" defaultValue="localhost:8080/legislators" />
        <button aria-label="Bookmark this page"><Star /></button>
      </AddressBar>
      {extensions.map(([name, icon]) => (
        <ToolButton key={name} aria-label={name}>{icon}</ToolButton>
      ))}
    </Toolbar>
    <BookmarksBar>
      {bookmarks.map(([name, icon]) => (
        <Bookmark key={name} href="#">{icon}{name}</Bookmark>
      ))}
      <Overflow aria-label="More bookmarks">
        <Svg w={28}><path d="M3 5l8 9-8 9M15 5l8 9-8 9" stroke="#5f6368" strokeWidth="4.500" /></Svg>
      </Overflow>
      <Divider />
      <Bookmark href="#" $end><Folder />Other bookmarks</Bookmark>
    </BookmarksBar>
  </header>
);

const LegislatorModal = ({ person }) => {
  const [tab, setTab] = useState("Info");

  return (
    <Backdrop>
      <Modal role="dialog" aria-label={person.name}>
        <ModalHeader>
          <ModalTitle>{person.name}</ModalTitle>
          <CloseButton aria-label="Close">
            <Svg w={34}><path d="M3 3l28 28M31 3L3 31" stroke="#7f7f7f" strokeWidth="7" /></Svg>
          </CloseButton>
        </ModalHeader>
        <ModalBody>
          <NavTabs>
            {["Info", "Sponsorships"].map((t) => (
              <NavLink key={t} href="#" $active={t === tab} onClick={() => setTab(t)}>{t}</NavLink>
            ))}
          </NavTabs>
          {tab === "Info" && (
            <Details>
              {person.info.map(([label, value]) => (
                <React.Fragment key={label}>
                  <Label>{label}:</Label>
                  <Value>{value}</Value>
                </React.Fragment>
              ))}
            </Details>
          )}
        </ModalBody>
        <ModalFooter>
          <ModalButton>Cancel</ModalButton>
          <ModalButton $primary>OK</ModalButton>
        </ModalFooter>
      </Modal>
    </Backdrop>
  );
};

const App = () => (
  <Screen>
    <GlobalStyle />
    <Browser />
    <Page>
      <SearchForm onSubmit={(e) => e.preventDefault()}>
        <SelectWrap>
          <FieldSelect aria-label="Search by">
            <option>Full Name</option>
          </FieldSelect>
          <Svg w={24} h={30}><path d="M0 12L12 0l12 12zM0 18h24L12 30z" fill="#343a40" /></Svg>
        </SelectWrap>
        <SearchInput aria-label="Name" defaultValue={legislator.name} />
        <SearchButton type="submit">Search</SearchButton>
      </SearchForm>
      <LegislatorModal person={legislator} />
    </Page>
    <Taskbar>
      <TaskGroup>
        {pinned.map(([name, icon]) => (
          <TaskButton key={name} aria-label={name}>{icon}</TaskButton>
        ))}
      </TaskGroup>
      <TaskGroup $gap={3}>
        {apps.map(([name, icon, state]) => (
          <TaskButton key={name} aria-label={name} $state={state}>{icon}</TaskButton>
        ))}
      </TaskGroup>
      <Tray>
        <TrayItem $space={53} aria-label="Hidden icons">
          <Svg w={38} h={20}><path d="M1 19L19 2l18 17" stroke="#fff" strokeWidth="3" /></Svg>
        </TrayItem>
        <TrayItem $space={55} aria-label="Battery"><Battery /></TrayItem>
        <TrayItem $space={46} aria-label="Network"><Wifi /></TrayItem>
        <TrayItem $space={48}>ENG</TrayItem>
        <TrayItem $space={66}>9:44 AM</TrayItem>
        <TrayItem $space={60} aria-label="Notifications"><Note /></TrayItem>
        <ShowDesktop aria-label="Show desktop" />
      </Tray>
    </Taskbar>
  </Screen>
);

export default App;
